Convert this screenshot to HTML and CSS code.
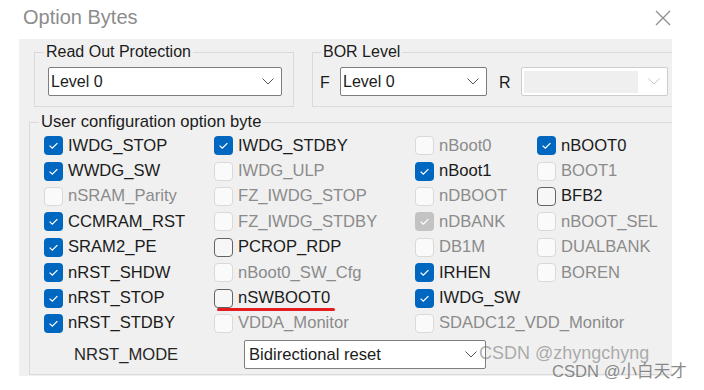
FILE: index.html
```html
<!DOCTYPE html>
<html lang="en">
<head>
    <meta charset="UTF-8">
    <title>Option Bytes</title>
    <link rel="stylesheet" href="styles.css">
</head>
<body>
    <div class="titlebar">
        <span class="title">Option Bytes</span>
        <svg class="close" width="16" height="16" viewBox="0 0 16 16">
            <path d="M1 1 L15 15 M15 1 L1 15" stroke="#8e8e8e" stroke-width="1.3" fill="none"/>
        </svg>
    </div>
    <div class="panel">
        <div class="top-groups">
            <fieldset class="group rop">
                <legend>Read Out Protection</legend>
                <div class="combo rop-combo">
                    <span>Level 0</span>
                    <svg class="chev" width="12" height="7" viewBox="0 0 12 7"><path d="M0.5 0.5 L6 6 L11.5 0.5" stroke="#555" fill="none"/></svg>
                </div>
            </fieldset>
            <fieldset class="group bor">
                <legend>BOR Level</legend>
                <div class="bor-row">
                    <span class="side-label">F</span>
                    <div class="combo bor-combo">
                        <span>Level 0</span>
                        <svg class="chev" width="12" height="7" viewBox="0 0 12 7"><path d="M0.5 0.5 L6 6 L11.5 0.5" stroke="#555" fill="none"/></svg>
                    </div>
                    <span class="side-label r">R</span>
                    <div class="combo bor-combo disabled">
                        <span class="fill"></span>
                        <svg class="chev" width="12" height="7" viewBox="0 0 12 7"><path d="M0.5 0.5 L6 6 L11.5 0.5" stroke="#c6c6c6" fill="none"/></svg>
                    </div>
                </div>
            </fieldset>
        </div>
        <fieldset class="group user">
            <legend>User configuration option byte</legend>
            <div class="opts" id="opts"></div>
            <div class="nrst-row">
                <span class="nrst-label">NRST_MODE</span>
                <div class="combo nrst-combo">
                    <span>Bidirectional reset</span>
                    <svg class="chev" width="12" height="7" viewBox="0 0 12 7"><path d="M0.5 0.5 L6 6 L11.5 0.5" stroke="#555" fill="none"/></svg>
                </div>
            </div>
        </fieldset>
    </div>
    <div class="watermark wm1">CSDN @zhyngchyng</div>
    <div class="watermark wm2">CSDN @小白天才</div>
    <script src="script.js"></script>
</body>
</html>
```

FILE: script.js
```js
// c = checked, o = enabled unchecked, d = disabled, dc = disabled checked, "" = empty cell
const options = [
    ["IWDG_STOP", "c"], ["IWDG_STDBY", "c"], ["nBoot0", "d"], ["nBOOT0", "c"],
    ["WWDG_SW", "c"], ["IWDG_ULP", "d"], ["nBoot1", "c"], ["BOOT1", "d"],
    ["nSRAM_Parity", "d"], ["FZ_IWDG_STOP", "d"], ["nDBOOT", "d"], ["BFB2", "o"],
    ["CCMRAM_RST", "c"], ["FZ_IWDG_STDBY", "d"], ["nDBANK", "dc"], ["nBOOT_SEL", "d"],
    ["SRAM2_PE", "c"], ["PCROP_RDP", "o"], ["DB1M", "d"], ["DUALBANK", "d"],
    ["nRST_SHDW", "c"], ["nBoot0_SW_Cfg", "d"], ["IRHEN", "c"], ["BOREN", "d"],
    ["nRST_STOP", "c"], ["nSWBOOT0", "o", "marked"], ["IWDG_SW", "c"], ["", ""],
    ["nRST_STDBY", "c"], ["VDDA_Monitor", "d"], ["SDADC12_VDD_Monitor", "d"], ["", ""]
];

const check = '<svg width="19" height="19" viewBox="0 0 19 19"><path d="M5.6 9.6 L8.3 12.2 L13.4 7.1" stroke="#fff" stroke-width="1.3" fill="none"/></svg>';

const opts = document.getElementById("opts");
options.forEach(([name, state, extra]) => {
    const cell = document.createElement("div");
    cell.className = "opt";
    if (name) {
        cell.classList.add("st-" + state);
        if (extra) cell.classList.add(extra);
        const isChecked = state === "c" || state === "dc";
        cell.innerHTML = '<span class="box">' + (isChecked ? check : "") + '</span><span class="name">' + name + '</span>';
    }
    opts.appendChild(cell);
});
```

FILE: styles.css
```css
* {
    box-sizing: border-box;
}
body {
    margin: 0;
    background: #fff;
    font-family: "Liberation Sans", Arial, sans-serif;
    color: #1b1b1b;
    position: relative;
    height: 390px;
    overflow: hidden;
}
.titlebar {
    height: 39px;
    display: flex;
    align-items: center;
    padding-left: 23px;
    padding-bottom: 5px;
}
.title {
    font-size: 20px;
    color: #8c8c8c;
    flex: 1;
}
.close {
    margin-right: 33px;
    margin-top: 2px;
}
.panel {
    margin-left: 19px;
    width: 653px;
    height: 337px;
    background: #f0f0f0;
    padding-top: 4px;
    overflow: hidden;
}
.top-groups {
    display: flex;
    width: 900px;
}
.group {
    margin: 0;
    border: 1px solid #dadada;
    min-width: 0;
}
.group legend {
    padding: 0 2px;
    font-size: 16px;
    line-height: 18px;
}
.rop {
    margin-left: 15px;
    width: 260px;
    padding: 6px 0 10px 13px;
}
.rop legend {
    margin-left: -4px;
}
.bor {
    margin-left: 18px;
    width: 420px;
    padding: 6px 0 10px 7px;
}
.bor legend {
    margin-left: 1px;
}
.combo {
    height: 29px;
    background: #fff;
    border: 1px solid #7d7d7d;
    border-radius: 2px;
    display: flex;
    align-items: center;
    justify-content: space-between;
    padding: 0 7px 0 2px;
    font-size: 16px;
}
.rop-combo {
    width: 234px;
}
.bor-row {
    display: flex;
    align-items: center;
}
.side-label {
    font-size: 16px;
    width: 20px;
    margin-top: 3px;
}
.side-label.r {
    margin-left: 12px;
    width: 22px;
}
.bor-combo {
    width: 147px;
}
.bor-combo.disabled {
    border-color: #cdcdcd;
    padding-left: 2px;
}
.bor-combo .fill {
    width: 114px;
    height: 22px;
    background: #efefef;
}
.user {
    margin-left: 10px;
    margin-top: 5px;
    width: 720px;
    padding: 1px 0 5px 14px;
}
.user legend {
    font-size: 16.6px;
    line-height: 20px;
    margin-left: -5px;
}
.opts {
    display: grid;
    grid-template-columns: 170px 201px 122px 150px;
    grid-auto-rows: 25.4px;
    font-size: 16.6px;
}
.opt {
    display: flex;
    align-items: center;
    gap: 5px;
    position: relative;
}
.box {
    width: 19px;
    height: 19px;
    border-radius: 4px;
    flex: none;
    display: block;
}
.box svg {
    display: block;
}
.st-c .box {
    background: #0067c0;
}
.st-o .box {
    background: #f7f7f7;
    border: 1px solid #646464;
}
.st-d .box {
    background: #fafafa;
    border: 1px solid #d9d9d9;
}
.st-dc .box {
    background: #c3c3c3;
}
.st-d .name,
.st-dc .name {
    color: #8b8b8b;
}
.marked::after {
    content: "";
    position: absolute;
    left: 3px;
    width: 118px;
    bottom: 0px;
    height: 3px;
    border-radius: 2px;
    background: #e41e1e;
}
.nrst-row {
    display: flex;
    align-items: center;
    margin-top: 4px;
}
.nrst-label {
    font-size: 16.6px;
    margin-left: 30px;
    width: 170px;
    color: #262626;
}
.nrst-combo {
    width: 242px;
    font-size: 16.6px;
    padding-left: 4px;
    padding-right: 8px;
}
.watermark {
    position: absolute;
    white-space: nowrap;
    font-family: "Liberation Sans", Arial, "Noto Sans CJK SC", sans-serif;
}
.wm1 {
    left: 479px;
    top: 342px;
    font-size: 18px;
    line-height: 22px;
    color: rgba(110, 110, 110, 0.55);
}
.wm2 {
    left: 552px;
    top: 362px;
    font-size: 16.6px;
    line-height: 20px;
    color: rgba(100, 100, 100, 0.75);
}
```
